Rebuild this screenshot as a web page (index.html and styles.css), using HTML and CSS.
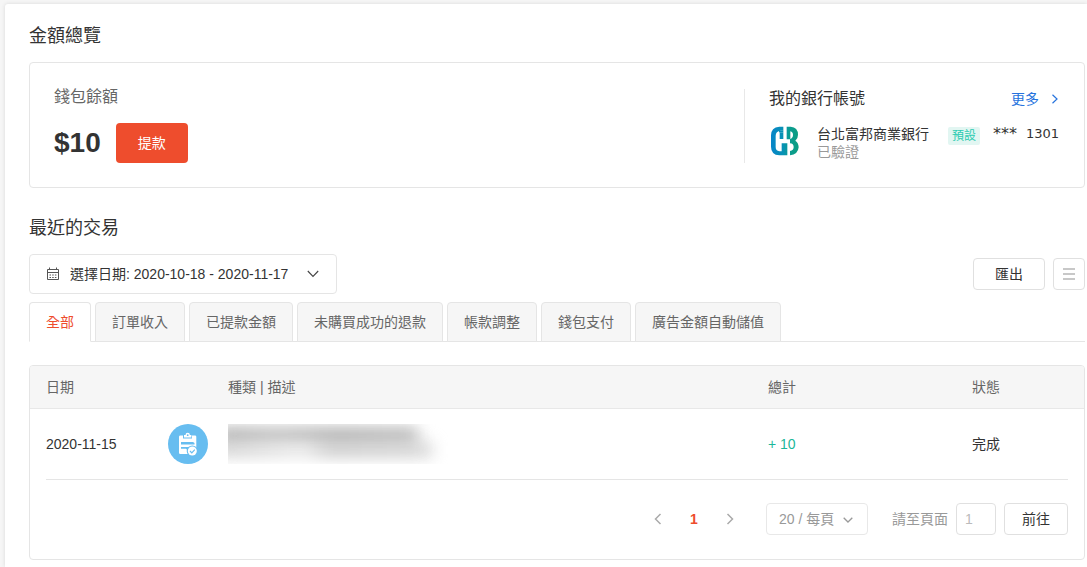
FILE: index.html
```html
<!DOCTYPE html>
<html lang="zh-Hant">
<head>
<meta charset="utf-8">
<title>我的錢包</title>
<link rel="stylesheet" href="styles.css">
</head>
<body>
<main class="panel">
  <section>
    <h2 class="heading">金額總覽</h2>
    <div class="overview">
      <div class="balance">
        <div class="balance-label">錢包餘額</div>
        <div class="balance-row">
          <span class="amount">$10</span>
          <button class="btn-primary" type="button">提款</button>
        </div>
      </div>
      <div class="bank">
        <div class="bank-head">
          <h3 class="bank-title">我的銀行帳號</h3>
          <a class="more" href="#">更多
            <svg width="8" height="10" viewBox="0 0 8 10" fill="none" stroke="currentColor" stroke-width="1.2"><path d="M1.500 .8 6 5 1.500 9.200"/></svg>
          </a>
        </div>
        <div class="bank-row">
          <svg class="bank-logo" width="32" height="32" viewBox="3 3 96 96" aria-hidden="true">
            <defs>
              <linearGradient id="fb" gradientUnits="userSpaceOnUse" x1="9" y1="0" x2="92" y2="0"><stop offset="0" stop-color="#0785c9"/><stop offset=".45" stop-color="#0892b4"/><stop offset=".65" stop-color="#0a9c92"/><stop offset="1" stop-color="#0b9d80"/></linearGradient>
            </defs>
            <path fill="url(#fb)" d="M34 8H46V20H38Q23 22 23 35V69Q23 80 34 82H41V58H58V94H34Q9 92 9 68V34Q9 10 34 8z"/>
            <path fill="url(#fb)" d="M33 25H46V20H33z"/>
            <path fill="url(#fb)" d="M56 8H68Q90 10 90 32Q90 44 82 50Q92 57 92 70Q90 92 66 94V81Q77 79 77 69Q77 59 66 58V46Q75 42 75 33Q75 24 67 22V46H56z"/>
            <path fill="url(#fb)" d="M35 25H46V45H35z"/>
          </svg>
          <div class="bank-info">
            <div class="bank-name">台北富邦商業銀行</div>
            <div class="bank-state">已驗證</div>
          </div>
          <span class="badge">預設</span>
          <span class="account"><span class="mask">***</span><span>1301</span></span>
        </div>
      </div>
    </div>
  </section>

  <section>
    <h2 class="heading">最近的交易</h2>
    <div class="toolbar">
      <button class="picker" type="button">
        <svg width="14" height="14" viewBox="0 0 14 14" fill="none" stroke="#555"><path d="M1.500 2.500h11v10h-11zM1.500 5.500h11M3.500.5v2M10.500.5v2"/><path d="M3.500 8h7M3.500 10.500h7" stroke-dasharray="1.500 1.200"/></svg>
        <span>選擇日期: 2020-10-18 - 2020-11-17</span>
        <svg class="picker-arrow" width="12" height="8" viewBox="0 0 12 8" fill="none" stroke="#444" stroke-width="1.100"><path d="M.8 1 6 6.500 11.200 1"/></svg>
      </button>
      <div class="actions">
        <button class="btn export" type="button">匯出</button>
        <button class="btn list" type="button" aria-label="匯出紀錄">
          <svg width="12" height="12" viewBox="0 0 12 12" fill="#c8c8c8"><path d="M0 0h12v2H0zM0 5h12v2H0zM0 10h12v2H0z"/></svg>
        </button>
      </div>
    </div>
    <nav class="tabs">
      <button class="tab active" type="button">全部</button>
      <button class="tab" type="button">訂單收入</button>
      <button class="tab" type="button">已提款金額</button>
      <button class="tab" type="button">未購買成功的退款</button>
      <button class="tab" type="button">帳款調整</button>
      <button class="tab" type="button">錢包支付</button>
      <button class="tab" type="button">廣告金額自動儲值</button>
    </nav>
    <div class="records">
      <table class="table">
        <colgroup><col class="c-date"><col class="c-icon"><col><col class="c-total"><col class="c-state"></colgroup>
        <thead>
          <tr><th colspan="2" class="date">日期</th><th>種類 | 描述</th><th>總計</th><th>狀態</th></tr>
        </thead>
        <tbody>
          <tr>
            <td class="date">2020-11-15</td>
            <td>
              <svg class="type-icon" width="40" height="40" viewBox="0 0 40 40" aria-hidden="true">
                <circle cx="20" cy="20" r="20" fill="#67bdf0"/>
                <path fill="#fff" d="M12.500 11.500H15V14.500H24V11.500h3q1.300 0 1.300 1.300V29q0 1-1 1H12.300q-1.300 0-1.300-1.300V12.800q0-1.300 1.500-1.300z"/>
                <path fill="#fff" d="M16 13.500v-2.500h1.500a2.200 2.200 0 0 1 4.400 0h1.500v2.500z"/>
                <circle cx="19.700" cy="11.200" r=".9" fill="#67bdf0"/>
                <path fill="#67bdf0" d="M13 18h12l1.500 1v1.600H13zM13 23h12v2.700H19l-1-1h-5z"/>
                <circle cx="24.300" cy="27" r="5.600" fill="#67bdf0"/>
                <path fill="#67bdf0" d="M24 27h6v5h-6z"/>
                <circle cx="24.300" cy="27" r="4.500" fill="#fff"/>
                <path d="m22 27 1.800 1.800 3-3.200" fill="none" stroke="#67bdf0" stroke-width="1.200"/>
              </svg>
            </td>
            <td><div class="masked" aria-hidden="true"><div class="smudge"></div><div class="smudge second"></div></div></td>
            <td class="plus">+ 10</td>
            <td>完成</td>
          </tr>
        </tbody>
      </table>
      <div class="pager">
        <div class="pages">
          <button class="page" type="button" aria-label="上一頁"><svg width="8" height="12" viewBox="0 0 8 12" fill="none" stroke="#aaa" stroke-width="1.500"><path d="M6.500 1 1.500 6l5 5"/></svg></button>
          <button class="page current" type="button">1</button>
          <button class="page" type="button" aria-label="下一頁"><svg width="8" height="12" viewBox="0 0 8 12" fill="none" stroke="#aaa" stroke-width="1.500"><path d="m1.500 1 5 5-5 5"/></svg></button>
        </div>
        <div class="size">
          <select class="size-select" aria-label="每頁筆數"><option>20 / 每頁</option></select>
          <svg class="size-arrow" width="10" height="6" viewBox="0 0 10 6" fill="none" stroke="#999" stroke-width="1.300"><path d="m.7.7 4.300 4.300L9.300.7"/></svg>
        </div>
        <div class="jump">
          <label for="page-no">請至頁面</label>
          <input id="page-no" class="page-input" type="text" value="1">
          <button class="btn go" type="button">前往</button>
        </div>
      </div>
    </div>
  </section>
</main>
</body>
</html>
```
FILE: styles.css
```css
* {
  box-sizing: border-box;
}

body {
  margin: 0;
  padding: 4px 0 0 5px;
  background: #f6f6f6;
  color: #333;
  font: 14px/20px "Liberation Sans", "Noto Sans CJK TC", sans-serif;
}

button,
input,
select {
  margin: 0;
  font: inherit;
  color: inherit;
}

svg {
  flex: none;
}

.panel {
  min-height: calc(100vh - 4px);
  padding: 20px 2px 7px 24px;
  background: #fff;
  border-top-left-radius: 3px;
  box-shadow: 0 0 4px rgba(0, 0, 0, 0.12);
}

.heading {
  margin: 0 0 14px;
  font-size: 18px;
  line-height: 24px;
  font-weight: 400;
}

.overview {
  display: flex;
  justify-content: space-between;
  margin-bottom: 28px;
  padding: 22px 25px 24px 24px;
  border: 1px solid #e5e5e5;
  border-radius: 4px;
}

.balance-label {
  margin-bottom: 14px;
  color: #666;
  font-size: 16px;
  line-height: 24px;
}

.balance-row {
  display: flex;
  align-items: center;
  gap: 15px;
}

.amount {
  font-size: 28px;
  font-weight: 700;
}

.btn-primary {
  width: 72px;
  height: 40px;
  border: 0;
  border-radius: 4px;
  background: #ee4d2d;
  color: #fff;
}

.bank {
  margin: 4px 0 0;
  padding-left: 24px;
  border-left: 1px solid #e8e8e8;
}

.bank-head {
  display: flex;
  align-items: center;
  justify-content: space-between;
  margin-bottom: 16px;
}

.bank-title {
  margin: 0;
  font-size: 16px;
  line-height: 20px;
  font-weight: 400;
}

.more {
  display: flex;
  align-items: center;
  gap: 12px;
  color: #2673dd;
  text-decoration: none;
}

.bank-row {
  display: flex;
  align-items: flex-start;
}

.bank-logo {
  margin-right: 16px;
}

.bank-info {
  margin-right: 19px;
  line-height: 18px;
}

.bank-state {
  color: #999;
}

.badge {
  margin-top: 2px;
  padding: 0 4px;
  border-radius: 2px;
  background: #e2f6f2;
  color: #2bcbb0;
  font-size: 12px;
  line-height: 18px;
}

.account {
  display: flex;
  gap: 9px;
  margin-left: 13px;
  font-family: "DejaVu Sans", sans-serif;
  font-size: 13px;
  line-height: 18px;
}

.mask {
  font-size: 16px;
}

.toolbar {
  display: flex;
  align-items: center;
  justify-content: space-between;
  margin-bottom: 8px;
}

.picker {
  display: flex;
  align-items: center;
  gap: 10px;
  height: 40px;
  padding: 0 17px 0 16px;
  border: 1px solid #e5e5e5;
  border-radius: 4px;
  background: #fff;
}

.picker-arrow {
  margin-left: 9px;
}

.actions {
  display: flex;
  gap: 8px;
}

.btn {
  height: 32px;
  padding: 0;
  border: 1px solid #e0e0e0;
  border-radius: 4px;
  background: #fff;
}

.export {
  width: 72px;
}

.list {
  display: flex;
  align-items: center;
  justify-content: center;
  width: 32px;
}

.tabs {
  display: flex;
  gap: 4px;
  margin-bottom: 23px;
  box-shadow: inset 0 -1px #e5e5e5;
}

.tab {
  height: 40px;
  padding: 0 16px;
  border: 1px solid #e5e5e5;
  border-radius: 4px 4px 0 0;
  background: #f6f6f6;
  color: #666;
}

.tab.active {
  border-bottom-color: #fff;
  background: #fff;
  color: #ee4d2d;
}

.records {
  overflow: hidden;
  border: 1px solid #e5e5e5;
  border-radius: 4px;
}

.table {
  width: 100%;
  table-layout: fixed;
  border-collapse: collapse;
}

.c-date {
  width: 138px;
}

.c-icon {
  width: 60px;
}

.c-total {
  width: 204px;
}

.c-state {
  width: 112px;
}

.table th {
  height: 42px;
  padding: 0;
  border-bottom: 1px solid #e8e8e8;
  background: #f6f6f6;
  color: #666;
  font-weight: 400;
  text-align: left;
}

.table td {
  height: 71px;
  padding: 0;
}

.table .date {
  padding-left: 16px;
}

.type-icon {
  display: block;
}

.masked {
  width: 220px;
  height: 40px;
  padding-top: 4px;
  overflow: hidden;
}

.smudge {
  width: 190px;
  height: 16px;
  margin-left: -10px;
  padding-left: 10px;
  box-sizing: content-box;
  background: linear-gradient(90deg, #a8a8a8, #b8b8b8 30%, #aaa 60%, #b4b4b4);
  filter: blur(8px);
}

.smudge.second {
  width: 204px;
  height: 12px;
  background: linear-gradient(90deg, #ccc, #e8e8e8 40%, #c4c4c4 52%, #ccc);
}

.plus {
  color: #1bb799;
}

.pager {
  display: flex;
  align-items: center;
  justify-content: flex-end;
  gap: 24px;
  margin: 0 16px;
  padding: 23px 0 24px;
  border-top: 1px solid #e5e5e5;
  color: #999;
}

.pages {
  display: flex;
  gap: 4px;
  margin-right: -4px;
}

.page {
  display: flex;
  align-items: center;
  justify-content: center;
  width: 32px;
  height: 32px;
  padding: 0;
  border: 0;
  background: none;
}

.page.current {
  color: #ee4d2d;
  font-weight: 700;
}

.size {
  position: relative;
}

.size-select {
  width: 102px;
  height: 32px;
  padding: 0 12px;
  border: 1px solid #e8e8e8;
  border-radius: 4px;
  background: #fff;
  appearance: none;
}

.size-arrow {
  position: absolute;
  top: 14px;
  right: 15px;
  pointer-events: none;
}

.jump {
  display: flex;
  align-items: center;
  gap: 8px;
}

.page-input {
  width: 40px;
  height: 32px;
  padding: 0 8px;
  border: 1px solid #e0e0e0;
  border-radius: 4px;
  color: #bbb;
}

.go {
  width: 64px;
  color: #333;
}
```
